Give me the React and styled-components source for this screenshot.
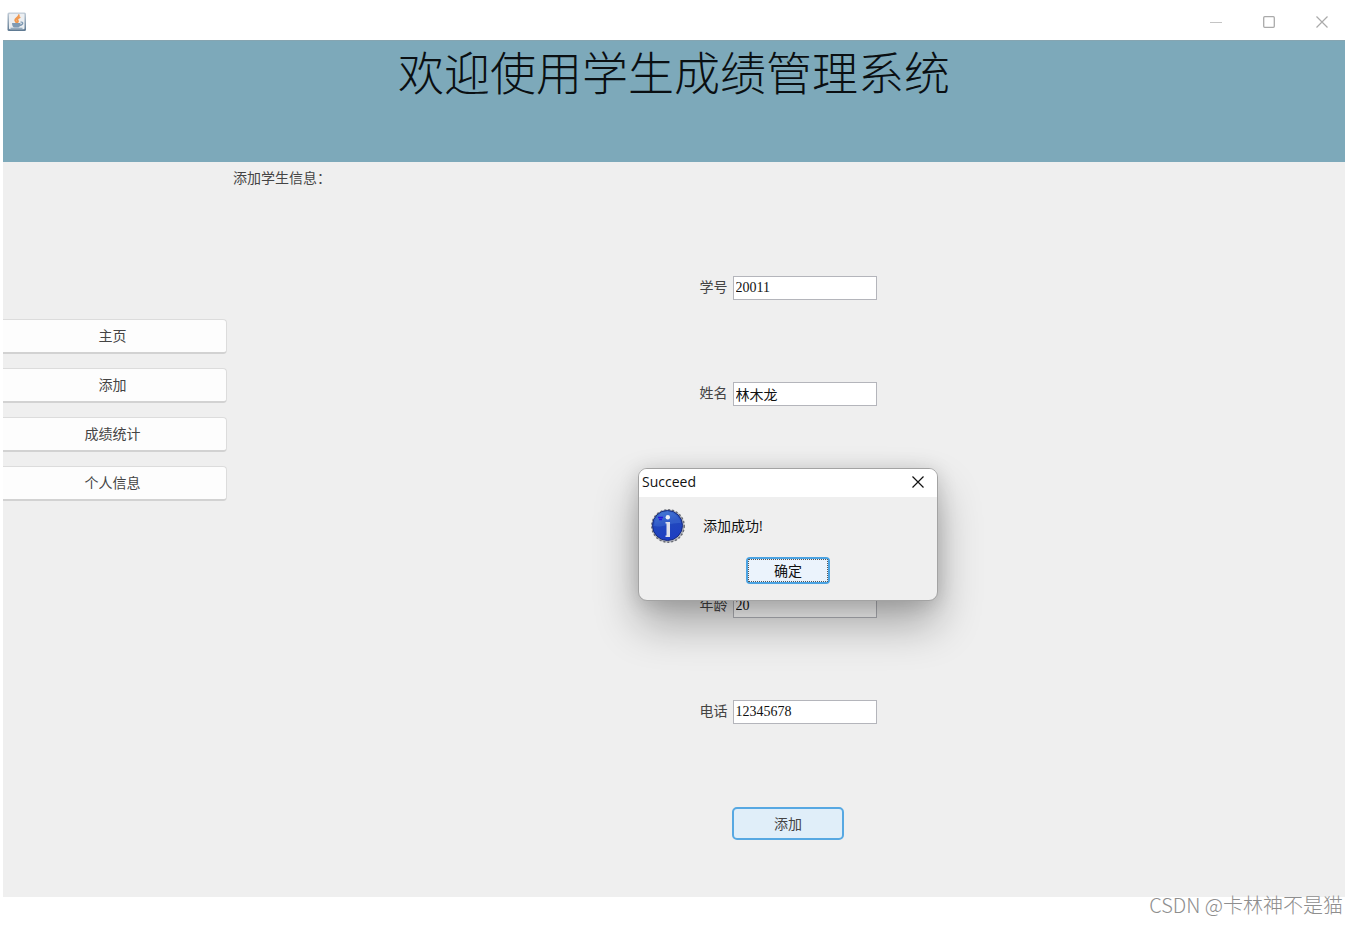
import React, { useState } from "react"
import styled, { createGlobalStyle } from "styled-components"

const menu = ["主页", "添加", "成绩统计", "个人信息"]

const fields = [
  { id: "number", label: "学号", value: "20011", row: 1 },
  { id: "name", label: "姓名", value: "林木龙", row: 2 },
  { id: "age", label: "年龄", value: "20", row: 4 },
  { id: "phone", label: "电话", value: "12345678", row: 5 },
]

const JavaIcon = () => (
  <svg width="20" height="20" viewBox="0 0 20 20" aria-hidden="true">
    <defs>
      <linearGradient id="frame" x1="0" y1="0" x2="0" y2="1">
        <stop offset="0" stopColor="#c3ced9" />
        <stop offset="1" stopColor="#5d7891" />
      </linearGradient>
    </defs>
    <rect x="0.5" y="0.5" width="18.5" height="18.5" rx="1.5" fill="url(#frame)" />
    <rect x="2" y="1.8" width="15.5" height="15.5" rx="1" fill="#eceff2" />
    <path
      d="M11.8 3.2c.6 2-3.8 3-3.6 5 .1 1 1 1.3 1.1 2.2M12.6 5.4c-2.2 1-3 2-1.8 3.2.6.7 0 1.3-.4 1.7"
      fill="none"
      stroke="#f0984f"
      strokeWidth="1.9"
      strokeLinecap="round"
    />
    <path d="M5 11h8.5c0 2.5-1 4.5-2.5 4.500H7.500C6 15.500 5 13.500 5 11z" fill="#7f9ab3" />
    <path d="M13.5 10.2c3-.8 3.300 2.300-.8 3.300" fill="none" stroke="#7f9ab3" strokeWidth="1.3" />
    <path d="M3.5 16.3h12" stroke="#8ea4b8" strokeWidth="1.2" />
  </svg>
)

const InfoIcon = () => (
  <svg width="36" height="36" viewBox="0 0 36 36" aria-hidden="true">
    <defs>
      <linearGradient id="ball" x1="0" y1="0" x2="0.3" y2="1">
        <stop offset="0" stopColor="#4a80d6" />
        <stop offset="0.5" stopColor="#2148bd" />
        <stop offset="1" stopColor="#1e3fc2" />
      </linearGradient>
    </defs>
    <circle cx="18" cy="18" r="16.500" fill="#b4b6bb" />
    <circle cx="18" cy="18" r="16.2" fill="none" stroke="#6a6d76" strokeWidth="1.5" strokeDasharray="2 2" />
    <circle cx="17.5" cy="17.5" r="15" fill="url(#ball)" stroke="#182c80" />
    <path d="M4 18C5 9 11 4 17.5 4S30 9 31 15C22 14 12 20 4 18z" fill="#4f82dc" opacity="0.35" />
    <path d="M8 9.5h5M9 11.500h3" stroke="#2413e0" strokeWidth="1.5" />
    <circle cx="17.8" cy="9.3" r="2.2" fill="#eef0f6" />
    <path d="M15.5 14h4.500v15h-4.500v-1.500h1V15.500h-1z" fill="#dfe1ea" />
  </svg>
)

const CloseIcon = ({ size }) => (
  <svg width={size} height={size} viewBox="0 0 12 12" aria-hidden="true">
    <path d="M0.5 0.5l11 11M11.5 0.5l-11 11" fill="none" stroke="currentColor" strokeWidth="1.2" />
  </svg>
)

const App = () => {
  const [values, setValues] = useState(
    Object.fromEntries(fields.map(item => [item.id, item.value]))
  )
  const [open, setOpen] = useState(true)

  const onSubmit = e => {
    e.preventDefault()
    setOpen(true)
  }

  return (
    <Page>
      <GlobalStyle />
      <TitleBar>
        <JavaIcon />
        <WindowControls>
          <ControlButton type="button" aria-label="最小化">
            <svg width="12" height="12" viewBox="0 0 12 12">
              <path d="M0 6.5h12" stroke="#c4c4c4" />
            </svg>
          </ControlButton>
          <ControlButton type="button" aria-label="最大化">
            <svg width="12" height="12" viewBox="0 0 12 12">
              <rect x="0.7" y="0.7" width="10.6" height="10.6" rx="1" fill="none" stroke="currentColor" strokeWidth="1.3" />
            </svg>
          </ControlButton>
          <ControlButton type="button" aria-label="关闭">
            <CloseIcon size={12} />
          </ControlButton>
        </WindowControls>
      </TitleBar>
      <Banner>
        <h1>欢迎使用学生成绩管理系统</h1>
      </Banner>
      <Content>
        <Sidebar>
          {menu.map(item => (
            <MenuButton type="button" key={item}>
              {item}
            </MenuButton>
          ))}
        </Sidebar>
        <Main>
          <Heading>添加学生信息：</Heading>
          <Form onSubmit={onSubmit}>
            <Fields>
              {fields.map(item => (
                <Field key={item.id} $row={item.row}>
                  <label htmlFor={item.id}>{item.label}</label>
                  <TextInput
                    id={item.id}
                    type="text"
                    value={values[item.id]}
                    onChange={e => setValues({ ...values, [item.id]: e.target.value })}
                  />
                </Field>
              ))}
            </Fields>
            <SubmitButton type="submit">添加</SubmitButton>
          </Form>
          {open && (
            <Dialog role="dialog" aria-labelledby="dialog-title">
              <DialogHeader>
                <h2 id="dialog-title">Succeed</h2>
                <DialogClose type="button" aria-label="关闭" onClick={() => setOpen(false)}>
                  <CloseIcon size={12} />
                </DialogClose>
              </DialogHeader>
              <DialogMessage>
                <InfoIcon />
                <p>添加成功!</p>
              </DialogMessage>
              <ConfirmButton type="button" onClick={() => setOpen(false)}>
                <span>确定</span>
              </ConfirmButton>
            </Dialog>
          )}
        </Main>
      </Content>
      <Watermark>CSDN @卡林神不是猫</Watermark>
    </Page>
  )
}

export default App

const GlobalStyle = createGlobalStyle`
  * {
    box-sizing: border-box;
  }
  body {
    margin: 0;
    background: #fff;
    color: #444;
    font-family: "Liberation Serif", "Noto Sans CJK SC", serif;
    font-size: 14px;
    line-height: 20px;
  }
  h1, h2, p {
    margin: 0;
    font-weight: normal;
  }
  button, input {
    font: inherit;
    color: inherit;
  }
  svg {
    display: block;
  }
`

const Page = styled.div`
  position: relative;
  display: flex;
  flex-direction: column;
  min-height: 100vh;
  padding: 0 13px 28px 3px;
`

const TitleBar = styled.header`
  display: flex;
  align-items: center;
  justify-content: space-between;
  height: 40px;
  padding: 4px 1px 0 4px;
`

const WindowControls = styled.div`
  display: flex;
  gap: 8px;
`

const ControlButton = styled.button`
  display: flex;
  align-items: center;
  justify-content: center;
  width: 45px;
  height: 32px;
  padding: 0;
  border: 0;
  background: none;
  color: #aaa;
`

const Banner = styled.div`
  height: 122px;
  background: #7da9ba;
  border-top: 1px solid #86a5b1;
  color: #0a0f12;
  text-align: center;
  h1 {
    font-family: "Noto Sans CJK SC", sans-serif;
    font-size: 46px;
    line-height: 58px;
    font-weight: 300;
  }
`

const Content = styled.div`
  display: flex;
  flex: 1;
  background: #efefef;
`

const Sidebar = styled.nav`
  display: flex;
  flex-direction: column;
  gap: 14px;
  width: 228px;
  padding: 157px 4px 0 0;
`

const MenuButton = styled.button`
  height: 35px;
  padding: 2px 4px 0 0;
  border: 1px solid #dcdcdc;
  border-bottom: 2px solid #d2d2d2;
  border-left: 0;
  border-radius: 0 4px 4px 0;
  background: #fdfdfd;
`

const Main = styled.main`
  position: relative;
  flex: 1;
`

const Heading = styled.p`
  padding: 7px 2px 6px;
`

const Form = styled.form`
  display: flex;
  flex-direction: column;
  align-items: center;
  padding-top: 40px;
`

const Fields = styled.div`
  display: grid;
  grid-template-rows: repeat(5, 106px);
  align-items: center;
`

const Field = styled.div`
  display: flex;
  align-items: center;
  gap: 5px;
  grid-row: ${props => props.$row};
`

const TextInput = styled.input`
  width: 144px;
  height: 24px;
  padding: 0 2px;
  border: 1px solid #b4b5bb;
  border-radius: 0;
  background: #fff;
  color: #111;
  outline: none;
`

const SubmitButton = styled.button`
  width: 112px;
  height: 33px;
  margin-top: 42px;
  padding: 2px 0 0;
  border: 2px solid #57a8e2;
  border-radius: 5px;
  background: #e0eef9;
`

const Dialog = styled.div`
  position: absolute;
  top: 306px;
  left: 50%;
  width: 300px;
  height: 133px;
  transform: translateX(-50%);
  overflow: hidden;
  border: 1px solid #a3a3a3;
  border-radius: 9px;
  background: #efefef;
  box-shadow: 0 24px 44px rgba(0, 0, 0, 0.3), 0 2px 20px rgba(0, 0, 0, 0.14);
  color: #111;
  font-family: "Open Sans", "Noto Sans CJK SC", sans-serif;
`

const DialogHeader = styled.div`
  display: flex;
  align-items: center;
  justify-content: space-between;
  height: 28px;
  padding: 0 6px 2px 3px;
  background: #fff;
  h2 {
    font-size: 14px;
  }
`

const DialogClose = styled.button`
  display: flex;
  align-items: center;
  justify-content: center;
  width: 26px;
  height: 26px;
  padding: 0;
  border: 0;
  background: none;
`

const DialogMessage = styled.div`
  display: flex;
  align-items: center;
  gap: 17px;
  padding: 11px 11px 13px;
`

const ConfirmButton = styled.button`
  display: block;
  width: 84px;
  height: 27px;
  margin: 0 auto;
  padding: 0;
  border: 2px solid #4ba3e2;
  border-radius: 4px;
  background: #ebf3fc;
  span {
    display: block;
    border: 1px dotted #555;
    line-height: 21px;
  }
`

const Watermark = styled.footer`
  position: absolute;
  right: 15px;
  bottom: 8px;
  color: #8e8e8e;
  font-family: "Noto Sans CJK SC", sans-serif;
  font-size: 20px;
  font-weight: 300;
  line-height: 24px;
`
